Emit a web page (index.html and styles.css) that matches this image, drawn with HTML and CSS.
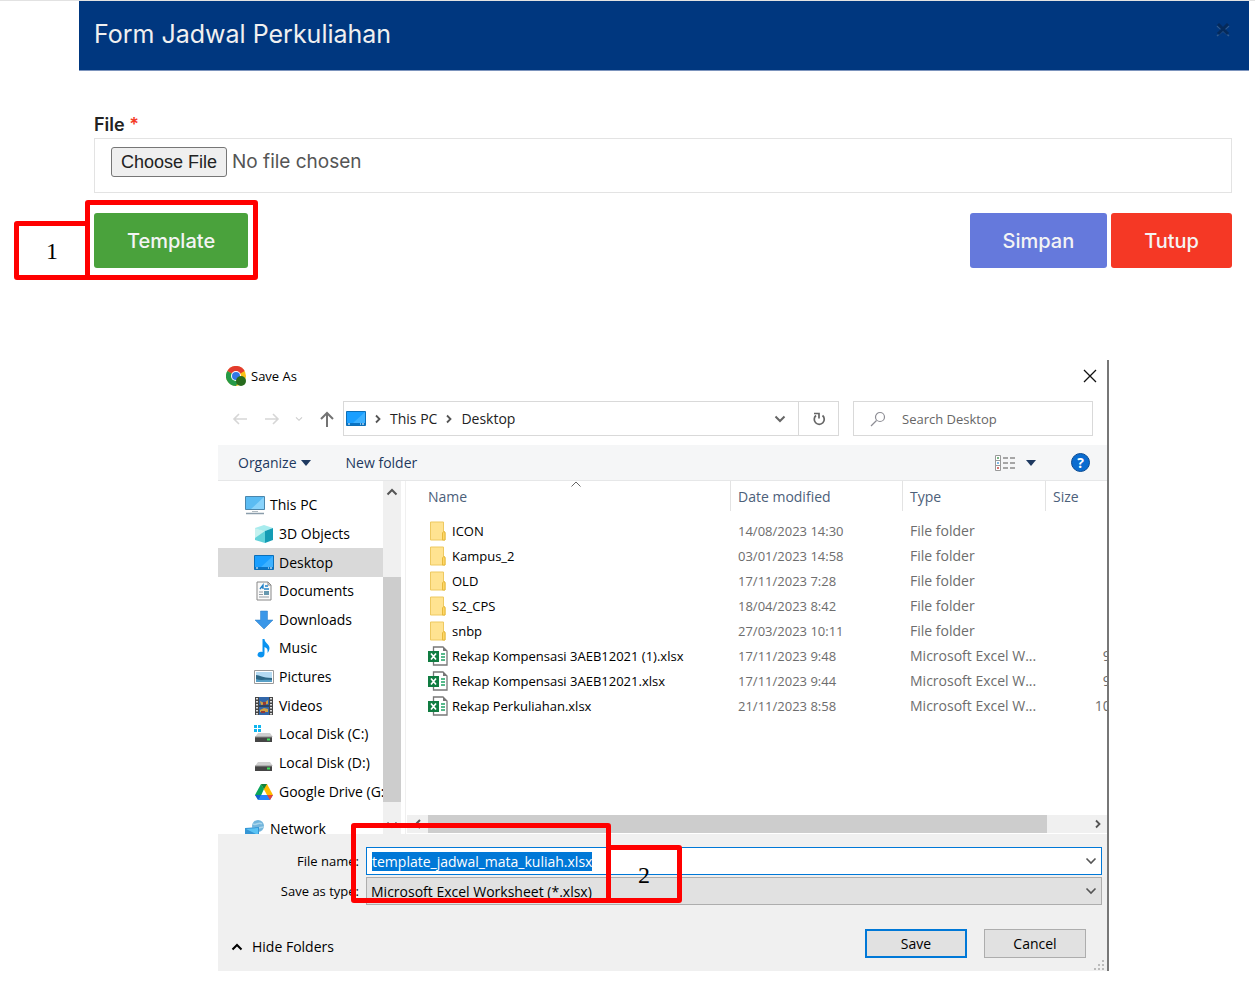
FILE: index.html
```html
<!DOCTYPE html>
<html lang="id">
<head>
    <meta charset="UTF-8">
    <meta name="viewport" content="width=device-width, initial-scale=1.0">
    <title>Form Jadwal Perkuliahan</title>
    <link rel="stylesheet" href="styles.css">
</head>
<body>
    <!-- shared icons -->
    <svg class="sprite" aria-hidden="true">
        <symbol id="i-down" viewBox="0 0 12 12"><path d="M1.500 3.500l4.500 4.500 4.500-4.500" fill="none" stroke="currentColor" stroke-width="1.600"/></symbol>
        <symbol id="i-up" viewBox="0 0 12 12"><path d="M1.500 8.500l4.500-4.500 4.500 4.500" fill="none" stroke="currentColor" stroke-width="2"/></symbol>
        <symbol id="i-right" viewBox="0 0 12 12"><path d="M4 2.500l3.500 3.500-3.500 3.500" fill="none" stroke="currentColor" stroke-width="1.800"/></symbol>
        <symbol id="i-left" viewBox="0 0 12 12"><path d="M8 2l-4 4 4 4" fill="none" stroke="currentColor" stroke-width="2"/></symbol>
        <symbol id="i-caret" viewBox="0 0 10 6"><path d="M0 0h10l-5 6z" fill="#1e3960"/></symbol>
        <symbol id="i-desktop" viewBox="0 0 20 20">
            <path d="M.5 2.500h19v14H.5z" fill="#1a9fff" stroke="#0c6fb8"/>
            <path d="M19 3v11L7 14z" fill="#3db1ff"/>
            <path d="M1 14h18v2H1z" fill="#0a74c4"/>
            <path d="M2 15h2M14 15h1M16 15h2" stroke="#fff"/>
        </symbol>
        <symbol id="i-folder" viewBox="0 0 20 20">
            <path d="M2.500 1h13v9l1.500 1v8H2.500z" fill="#ffe391" stroke="#eec961"/>
            <path d="M14.500 19v-7l1-1.500 1.500 1V19z" fill="#ffd766" stroke="#e6b93c"/>
        </symbol>
        <symbol id="i-excel" viewBox="0 0 20 20">
            <path d="M5.500 1h9.500l4 4v14H5.500z" fill="#fff" stroke="#777" stroke-width="1.300"/>
            <path d="M15 1v4h4z" fill="#777"/>
            <path d="M13 8h4M13 11h4M13 14h4" stroke="#21a366" stroke-width="1.400"/>
            <path d="M0 5h11v11H0z" fill="#107c41"/>
            <path d="M3 7.500l5 6M8 7.500l-5 6" stroke="#fff" stroke-width="1.700"/>
        </symbol>
        <symbol id="i-disk" viewBox="0 0 20 20">
            <path d="M4 9h12l3 4H1z" fill="#cfcfcf"/>
            <path d="M1 13h17v5H1z" fill="#454545"/>
            <path d="M1 13h17" stroke="#8b8b8b"/>
            <path d="M13 15.500h3" stroke="#3fe05a" stroke-width="2"/>
        </symbol>
    </svg>

    <section class="modal">
        <header class="modal-header">
            <h1>Form Jadwal Perkuliahan</h1>
            <button type="button" class="modal-close" aria-label="Close">
                <svg viewBox="0 0 16 14" width="16" height="14"><path d="M2 3l6 5 6-5M2 13l6-5 6 5" fill="none" stroke="#315b8f" stroke-width="1.500"/><path d="M3 1l10 10M13 1L3 11" stroke="#052a5b" stroke-width="3"/></svg>
            </button>
        </header>
        <form class="modal-body">
            <label for="file">File <span class="required">*</span></label>
            <input type="file" id="file" class="file-input">
            <div class="modal-actions">
                <div class="marked">
                    <button type="button" class="btn btn-success">Template</button>
                    <div class="mark mark-template"></div>
                    <div class="mark mark-one">1</div>
                </div>
                <div class="action-group">
                    <button type="button" class="btn btn-primary">Simpan</button>
                    <button type="button" class="btn btn-danger">Tutup</button>
                </div>
            </div>
        </form>
    </section>

    <section class="dialog">
        <header class="title-bar">
            <svg class="icon" viewBox="0 0 20 20">
                <circle cx="10" cy="10" r="10" fill="#fbc116"/>
                <path d="M10 10L1.300 5A10 10 0 0 1 18.700 5z" fill="#e33b2e"/>
                <path d="M10 10L1.300 5A10 10 0 0 0 10 20l4-7z" fill="#269a48"/>
                <circle cx="10" cy="10" r="5" fill="#fff"/>
                <circle cx="10" cy="10" r="4" fill="#3377e8"/>
                <circle cx="15" cy="15" r="5" fill="#276b1d"/>
            </svg>
            <h2>Save As</h2>
            <button type="button" class="plain" aria-label="Close">
                <svg viewBox="0 0 14 14" width="14" height="14"><path d="M1 1l12 12M13 1L1 13" stroke="#111" stroke-width="1.300"/></svg>
            </button>
        </header>

        <div class="nav-bar">
            <div class="nav-buttons">
                <button type="button" class="plain" aria-label="Back"><svg viewBox="0 0 16 16" width="16" height="16"><path d="M15 8H2M7 3L2 8l5 5" fill="none" stroke="#d6d6d6" stroke-width="1.600"/></svg></button>
                <button type="button" class="plain" aria-label="Forward"><svg viewBox="0 0 16 16" width="16" height="16"><path d="M1 8h13M9 3l5 5-5 5" fill="none" stroke="#d6d6d6" stroke-width="1.600"/></svg></button>
                <button type="button" class="plain pale" aria-label="Recent"><svg width="8" height="8"><use href="#i-down"/></svg></button>
                <button type="button" class="plain" aria-label="Up"><svg viewBox="0 0 16 16" width="16" height="16"><path d="M8 16V2M2 8l6-6 6 6" fill="none" stroke="#737373" stroke-width="2"/></svg></button>
            </div>
            <div class="address">
                <svg class="icon"><use href="#i-desktop"/></svg>
                <svg class="chevron"><use href="#i-right"/></svg>
                <a href="#">This PC</a>
                <svg class="chevron"><use href="#i-right"/></svg>
                <a href="#">Desktop</a>
                <button type="button" class="plain address-drop" aria-label="History"><svg viewBox="0 0 12 12" width="12" height="12"><path d="M1.500 3.500L6 8l4.500-4.500" fill="none" stroke="#666" stroke-width="2"/></svg></button>
                <button type="button" class="plain refresh" aria-label="Refresh"><svg viewBox="0 0 14 14" width="14" height="14"><path d="M10.500 3.500a5 5 0 1 1-6.500 0M2 1.500h5v5" fill="none" stroke="#666" stroke-width="1.700"/></svg></button>
            </div>
            <div class="search">
                <svg viewBox="0 0 16 16" width="16" height="16"><circle cx="10" cy="6" r="4.500" fill="none" stroke="#8d8d94" stroke-width="1.200"/><path d="M6.500 9.500L1 15" stroke="#8d8d94" stroke-width="1.200"/></svg>
                <input type="text" placeholder="Search Desktop" aria-label="Search Desktop">
            </div>
        </div>

        <div class="tool-bar">
            <button type="button" class="plain">Organize <svg width="10" height="6"><use href="#i-caret"/></svg></button>
            <button type="button" class="plain">New folder</button>
            <button type="button" class="plain view-button" aria-label="Change view">
                <svg viewBox="0 0 20 16" width="20" height="16">
                    <path d="M.5.5h5v15h-5zM.5 5.500h5M.5 10.500h5" fill="#fff" stroke="#999"/>
                    <path d="M2 3h2" stroke="#4c9b5c" stroke-width="1.500"/><path d="M2 8h2" stroke="#55a0dc" stroke-width="1.500"/><path d="M2 13h2" stroke="#c44" stroke-width="1.500"/>
                    <path d="M8 3h5M15 3h5M8 8h5M15 8h5M8 13h5M15 13h5" stroke="#8c8c8c" stroke-width="1.300"/>
                </svg>
                <svg width="10" height="6"><use href="#i-caret"/></svg>
            </button>
            <button type="button" class="help" aria-label="Help">?</button>
        </div>

        <div class="panes">
            <nav class="tree">
                <ul>
                    <li class="root"><svg class="icon" viewBox="0 0 20 20"><path d="M.5 1.500h19v13H.5z" fill="#5bbcf3" stroke="#4a86ac"/><path d="M19 2v12H6z" fill="#89d3fb"/><path d="M7 16h6v1H7z" fill="#b0bac0"/><path d="M1 18.500h18" stroke="#8b9dab" stroke-width="1.500"/></svg><span>This PC</span></li>
                    <li><svg class="icon" viewBox="0 0 20 20"><path d="M1 4l9-3 9 3-8 3z" fill="#a8ecee"/><path d="M1 4l10 3v12L1 16z" fill="#62d3da"/><path d="M19 4l-8 3v12l8-3z" fill="#149cb4"/><path d="M1 4l10 3-10 7z" fill="#c5f2f0"/></svg><span>3D Objects</span></li>
                    <li class="selected"><svg class="icon"><use href="#i-desktop"/></svg><span>Desktop</span></li>
                    <li><svg class="icon" viewBox="0 0 20 20"><path d="M3 1h11l3 3v15H3z" fill="#fafafa" stroke="#888"/><path d="M14 1v3h3" fill="none" stroke="#888"/><path d="M6 8l3-4v4M11 5h3M10 8h5" stroke="#2684c9" fill="none" stroke-width="1.400"/><path d="M5 11h4M5 13.500h4M5 16h10" stroke="#929ca4"/><path d="M10 10h5v4h-5z" fill="#6597ae"/></svg><span>Documents</span></li>
                    <li><svg class="icon" viewBox="0 0 20 20"><path d="M6.500 1h7v9H19l-9 9-9-9h5.500z" fill="#3b97e8" stroke="#2a7cc6" stroke-width=".5"/></svg><span>Downloads</span></li>
                    <li><svg class="icon" viewBox="0 0 20 20"><path d="M8.500 1h2c0 4 5 5 5 9 0 2-1 4-2 5 .5-4-.5-5-3-6v7c0 5-7 4-7 1 0-3 3-4 5-3z" fill="#0a93f0"/></svg><span>Music</span></li>
                    <li><svg class="icon" viewBox="0 0 20 20"><path d="M.5 3.500h19v13H.5z" fill="#fff" stroke="#9a9a9a"/><path d="M2 5h16v10H2z" fill="#b4daf2"/><path d="M2 8c4 0 6 3 16 3v4H2z" fill="#2d6786"/><path d="M2 12c5 2 10 0 16 1v2H2z" fill="#589fc5"/></svg><span>Pictures</span></li>
                    <li><svg class="icon" viewBox="0 0 20 20"><path d="M1 1h18v18H1z" fill="#454545"/><path d="M5 1h10v18H5z" fill="#3266a9"/><path d="M6 5l4 2 4-3v4l-7 1zM6 14l4-2 4 1v3H6z" fill="#d0a044"/><path d="M9 6h3v3H9zM7 15h4v2H7z" fill="#923c36"/><path d="M3 2v17M17 2v17" stroke="#ddd" stroke-width="2" stroke-dasharray="1.500 1.500"/><path d="M5 10h10" stroke="#222"/></svg><span>Videos</span></li>
                    <li><svg class="icon" viewBox="0 0 20 20"><use href="#i-disk"/><path d="M0 1h3v3H0zM4 1h3v3H4zM0 5h3v3H0zM4 5h3v3H4z" fill="#10b6ef"/></svg><span>Local Disk (C:)</span></li>
                    <li><svg class="icon"><use href="#i-disk"/></svg><span>Local Disk (D:)</span></li>
                    <li><svg class="icon" viewBox="0 0 20 20"><path d="M7 2h6l6 11h-6z" fill="#ffba00"/><path d="M7 2l3 5-5 11-4-5z" fill="#0aa55c"/><path d="M7 2h6l-3 5z" fill="#12813d"/><path d="M7 13h12l-3 5H4z" fill="#2684fc"/><path d="M13 13h6l-3 5z" fill="#e94335"/><path d="M1 13h6l-3 5z" fill="#1460d0"/></svg><span>Google Drive (G:</span></li>
                </ul>
                <ul class="network">
                    <li class="root"><svg class="icon" viewBox="0 0 20 20"><circle cx="13" cy="7" r="6" fill="#72b5dc"/><path d="M8 5c4 2 5-3 9 0M8 9c4 1 7-1 11-1" fill="none" stroke="#a9d5eb" stroke-width="1.500"/><path d="M0 9l14-1v9L0 19z" fill="#3596d5"/><path d="M1 10l12-1v7z" fill="#5ac3f4"/></svg><span>Network</span></li>
                </ul>
            </nav>
            <div class="scroll-y">
                <svg width="12" height="12"><use href="#i-up"/></svg>
                <div class="thumb"></div>
                <svg width="12" height="12"><use href="#i-down"/></svg>
            </div>
            <div class="list">
                <table>
                    <thead>
                        <tr>
                            <th class="col-name">Name<svg class="sort" viewBox="0 0 12 6" width="12" height="6"><path d="M1.500 5.500L6 1l4.500 4.500" fill="none" stroke="#666"/></svg></th>
                            <th class="col-date">Date modified</th>
                            <th class="col-type">Type</th>
                            <th class="col-size">Size</th>
                        </tr>
                    </thead>
                    <tbody>
                        <tr><td><div class="file"><svg class="icon"><use href="#i-folder"/></svg>ICON</div></td><td class="date">14/08/2023 14:30</td><td>File folder</td><td></td></tr>
                        <tr><td><div class="file"><svg class="icon"><use href="#i-folder"/></svg>Kampus_2</div></td><td class="date">03/01/2023 14:58</td><td>File folder</td><td></td></tr>
                        <tr><td><div class="file"><svg class="icon"><use href="#i-folder"/></svg>OLD</div></td><td class="date">17/11/2023 7:28</td><td>File folder</td><td></td></tr>
                        <tr><td><div class="file"><svg class="icon"><use href="#i-folder"/></svg>S2_CPS</div></td><td class="date">18/04/2023 8:42</td><td>File folder</td><td></td></tr>
                        <tr><td><div class="file"><svg class="icon"><use href="#i-folder"/></svg>snbp</div></td><td class="date">27/03/2023 10:11</td><td>File folder</td><td></td></tr>
                        <tr><td><div class="file"><svg class="icon"><use href="#i-excel"/></svg>Rekap Kompensasi 3AEB12021 (1).xlsx</div></td><td class="date">17/11/2023 9:48</td><td>Microsoft Excel W...</td><td>9 KB</td></tr>
                        <tr><td><div class="file"><svg class="icon"><use href="#i-excel"/></svg>Rekap Kompensasi 3AEB12021.xlsx</div></td><td class="date">17/11/2023 9:44</td><td>Microsoft Excel W...</td><td>9 KB</td></tr>
                        <tr><td><div class="file"><svg class="icon"><use href="#i-excel"/></svg>Rekap Perkuliahan.xlsx</div></td><td class="date">21/11/2023 8:58</td><td>Microsoft Excel W...</td><td>10 KB</td></tr>
                    </tbody>
                </table>
                <div class="scroll-x">
                    <svg width="12" height="12"><use href="#i-left"/></svg>
                    <div class="thumb"></div>
                    <svg width="12" height="12"><use href="#i-right"/></svg>
                </div>
            </div>
        </div>

        <form class="save-form">
            <div class="fields">
                <label for="filename">File name:</label>
                <div class="combo active">
                    <input type="text" id="filename" value="template_jadwal_mata_kuliah.xlsx" autocomplete="off">
                    <svg width="12" height="12"><use href="#i-down"/></svg>
                </div>
                <label for="filetype">Save as type:</label>
                <div class="combo">
                    <select id="filetype">
                        <option>Microsoft Excel Worksheet (*.xlsx)</option>
                    </select>
                    <svg width="12" height="12"><use href="#i-down"/></svg>
                </div>
                <div class="mark mark-fields"></div>
                <div class="mark mark-two">2</div>
            </div>
            <div class="save-actions">
                <button type="button" class="plain hide-folders"><svg width="12" height="12"><use href="#i-up"/></svg>Hide Folders</button>
                <button type="button" class="dialog-btn default">Save</button>
                <button type="button" class="dialog-btn">Cancel</button>
            </div>
            <svg class="grip" viewBox="0 0 10 10" width="10" height="10"><path d="M8 0h2v2H8zM4 4h2v2H4zM8 4h2v2H8zM0 8h2v2H0zM4 8h2v2H4zM8 8h2v2H8z" fill="#bbb"/></svg>
        </form>
    </section>

    <script>
        // file name starts out selected so it can be typed over
        const filename = document.getElementById('filename');
        filename.focus({ preventScroll: true });
        filename.select();
    </script>
</body>
</html>
```

FILE: styles.css
```css
* {
    box-sizing: border-box;
}
body {
    margin: 0;
    background-color: #ffffff;
    border-top: 1px solid #e2e2e2;
    font-family: "Open Sans", "Noto Sans", sans-serif;
    font-size: 14px;
    color: #000;
}
button, input, select {
    font: inherit;
    color: inherit;
}
svg {
    flex-shrink: 0;
}
.sprite {
    display: none;
}
.icon {
    width: 20px;
    height: 20px;
}
.plain {
    display: flex;
    align-items: center;
    padding: 0;
    border: none;
    background: none;
}

/* Upload form */
.modal {
    margin: 0 6px 0 79px;
    font-family: Inter, sans-serif;
}
.modal-header {
    display: flex;
    justify-content: space-between;
    height: 70px;
    padding: 15px 18px 0 15px;
    background-color: #00377f;
    border-bottom: 1px solid #7c94bd;
}
.modal-header h1 {
    margin: 0;
    font-size: 25px;
    line-height: 36px;
    font-weight: 400;
    color: #f0f0f0;
}
.modal-close {
    height: 30px;
    padding: 0;
    border: none;
    background: none;
}
.modal-body {
    padding: 40px 17px 0 15px;
}
.modal-body label {
    display: block;
    font-size: 18px;
    line-height: 27px;
    font-weight: 600;
    color: #222;
}
.required {
    color: #f43a26;
}
.file-input {
    display: block;
    width: 100%;
    height: 55px;
    padding: 8px 16px;
    border: 1px solid #e3e3e3;
    font-size: 19px;
    color: #555;
}
.file-input::file-selector-button {
    height: 30px;
    margin-right: 5px;
    padding: 0 9px;
    border: 1px solid #767676;
    border-radius: 3px;
    background-color: #efefef;
    font-family: "Liberation Sans", Arial, sans-serif;
    font-size: 18px;
    color: #222;
}
.modal-actions {
    display: flex;
    justify-content: space-between;
    margin-top: 20px;
}
.action-group {
    display: flex;
    gap: 4px;
}
.btn {
    display: block;
    height: 55px;
    padding: 0 33px;
    border: none;
    border-radius: 3px;
    font-size: 20px;
    font-weight: 500;
    color: #f4f4f4;
}
.btn-success {
    background-color: #4aa23c;
}
.btn-primary {
    background-color: #6579dc;
}
.btn-danger {
    background-color: #f53825;
}

/* Red step markers, drawn over the controls */
.marked, .fields {
    position: relative;
}
.mark {
    position: absolute;
    border: 5px solid #ff0000;
    border-radius: 3px;
    font-family: "Liberation Serif", serif;
    font-size: 24px;
    line-height: 50px;
    text-align: center;
    pointer-events: none;
}
.mark-template {
    top: -13px;
    left: -9px;
    right: -10px;
    bottom: -12px;
}
.mark-one {
    top: 8px;
    left: -80px;
    width: 76px;
    bottom: -12px;
}
.mark-fields {
    top: -24px;
    left: 133px;
    width: 260px;
    bottom: 2px;
}
.mark-two {
    top: -2px;
    left: 388px;
    width: 76px;
    bottom: 2px;
}

/* Save As dialog */
.dialog {
    margin: 92px 146px 15px 218px;
    border-right: 2px solid #777;
}
.title-bar {
    display: flex;
    align-items: center;
    gap: 5px;
    height: 32px;
    padding: 0 10px 0 8px;
}
.title-bar h2 {
    flex: 1;
    margin: 0;
    font-size: 13px;
    font-weight: 400;
}
.nav-bar {
    display: flex;
    padding: 9px 14px 9px 0;
}
.nav-buttons {
    display: flex;
    justify-content: space-between;
    width: 125px;
    padding: 0 8px 0 14px;
}
.pale {
    color: #ccc;
}
.address {
    flex: 1;
    display: flex;
    align-items: center;
    gap: 8px;
    height: 35px;
    padding-left: 2px;
    border: 1px solid #d9d9d9;
}
.address a {
    color: #222;
    text-decoration: none;
}
.chevron {
    width: 12px;
    height: 12px;
    margin: 0 -2px;
    color: #555;
}
.address-drop {
    margin-left: auto;
    padding: 0 4px;
}
.refresh {
    justify-content: center;
    align-self: stretch;
    width: 40px;
    border-left: 1px solid #d9d9d9;
}
.search {
    display: flex;
    align-items: center;
    gap: 16px;
    width: 240px;
    margin-left: 14px;
    padding-left: 16px;
    border: 1px solid #d9d9d9;
    font-size: 13px;
}
.search input {
    flex: 1;
    min-width: 0;
    padding: 0;
    border: none;
    outline: none;
}
.search input::placeholder {
    color: #666;
}
.tool-bar {
    display: flex;
    align-items: center;
    height: 36px;
    padding: 0 17px 0 20px;
    background-color: #f5f6f7;
    border-bottom: 1px solid #e6e7e8;
    color: #1e3960;
}
.tool-bar .plain {
    gap: 4px;
    margin-right: 35px;
}
.tool-bar .view-button {
    gap: 11px;
    margin-left: auto;
}
.help {
    width: 19px;
    height: 19px;
    padding: 0;
    border: 1px solid #0a4b93;
    border-radius: 50%;
    background-color: #0a6cd0;
    font-weight: 700;
    line-height: 17px;
    color: #fff;
}

.panes {
    display: flex;
    height: 353px;
}
.tree {
    width: 165px;
    padding-top: 10px;
    overflow: hidden;
}
.tree ul {
    display: grid;
    grid-template-rows: repeat(11, 1fr);
    height: 315px;
    margin: 0;
    padding: 0;
    list-style: none;
}
.tree .network {
    display: block;
    height: auto;
    margin-top: 9px;
}
.tree li {
    display: flex;
    align-items: center;
    gap: 5px;
    padding-left: 36px;
    line-height: 28px;
    white-space: nowrap;
}
.tree .root {
    padding-left: 27px;
}
.tree .selected {
    background-color: #d9d9d9;
}
.scroll-y {
    display: flex;
    flex-direction: column;
    align-items: center;
    width: 18px;
    margin-right: 4px;
    padding: 5px 0 3px;
    background-color: #f0f0f0;
    color: #555;
}
.scroll-y .thumb {
    width: 100%;
    height: 225px;
    margin: auto 0 17px;
    background-color: #cdcdcd;
}
.list {
    flex: 1;
    min-width: 0;
    display: flex;
    flex-direction: column;
    justify-content: space-between;
    overflow: hidden;
    border-left: 1px solid #f0f0f0;
}
.list table {
    width: calc(100% + 17px);
    margin-left: 15px;
    table-layout: fixed;
    border-collapse: separate;
    border-spacing: 0;
}
.list th {
    position: relative;
    height: 30px;
    padding: 0 7px;
    border-right: 1px solid #e3e3e3;
    text-align: left;
    font-weight: 400;
    color: #4c607a;
}
.col-date {
    width: 172px;
}
.col-type {
    width: 143px;
}
.col-size {
    width: 93px;
}
.sort {
    position: absolute;
    top: 0;
    left: calc(50% - 6px);
}
.list td {
    height: 25px;
    padding: 0 7px;
    white-space: nowrap;
    color: #6d6d6d;
}
.list tbody::before {
    content: "";
    display: block;
    height: 7px;
}
.list td:last-child {
    text-align: right;
}
.list .date {
    font-size: 13px;
}
.list .file {
    display: flex;
    align-items: center;
    gap: 4px;
    font-size: 13px;
    color: #000;
}
.scroll-x {
    display: flex;
    align-items: center;
    justify-content: space-between;
    height: 18px;
    margin: 0 0 1px 1px;
    padding: 0 3px 0 5px;
    background-color: #f0f0f0;
    color: #555;
}
.scroll-x .thumb {
    flex: 1;
    height: 100%;
    margin: 0 45px 0 4px;
    background-color: #cdcdcd;
}

.save-form {
    position: relative;
    padding: 13px 5px 13px 0;
    background-color: #f0f0f0;
}
.fields {
    display: grid;
    grid-template-columns: 141px 1fr;
    gap: 2px 7px;
    align-items: center;
}
.fields label {
    font-size: 13px;
    text-align: right;
    white-space: nowrap;
}
.combo {
    display: flex;
    align-items: center;
    height: 28px;
    padding-right: 4px;
    border: 1px solid #adadad;
    background-color: #e1e1e1;
    color: #555;
}
.combo.active {
    padding-left: 5px;
    border-color: #0078d7;
    background-color: #fff;
}
.combo input, .combo select {
    flex: 1;
    min-width: 0;
    padding: 0 0 0 4px;
    border: none;
    outline: none;
    background: none;
    appearance: none;
    color: #000;
}
.combo.active input {
    padding: 0;
}
.combo input::selection {
    background-color: #0078d7;
    color: #fff;
}
.save-actions {
    display: flex;
    align-items: center;
    gap: 17px;
    margin-top: 24px;
    padding: 0 16px 0 13px;
}
.hide-folders {
    gap: 9px;
    margin-right: auto;
    padding-top: 6px;
}
.dialog-btn {
    width: 102px;
    height: 29px;
    padding: 0;
    border: 1px solid #adadad;
    background-color: #e1e1e1;
}
.dialog-btn.default {
    border: 2px solid #0078d7;
}
.grip {
    position: absolute;
    right: 3px;
    bottom: 1px;
}
```
